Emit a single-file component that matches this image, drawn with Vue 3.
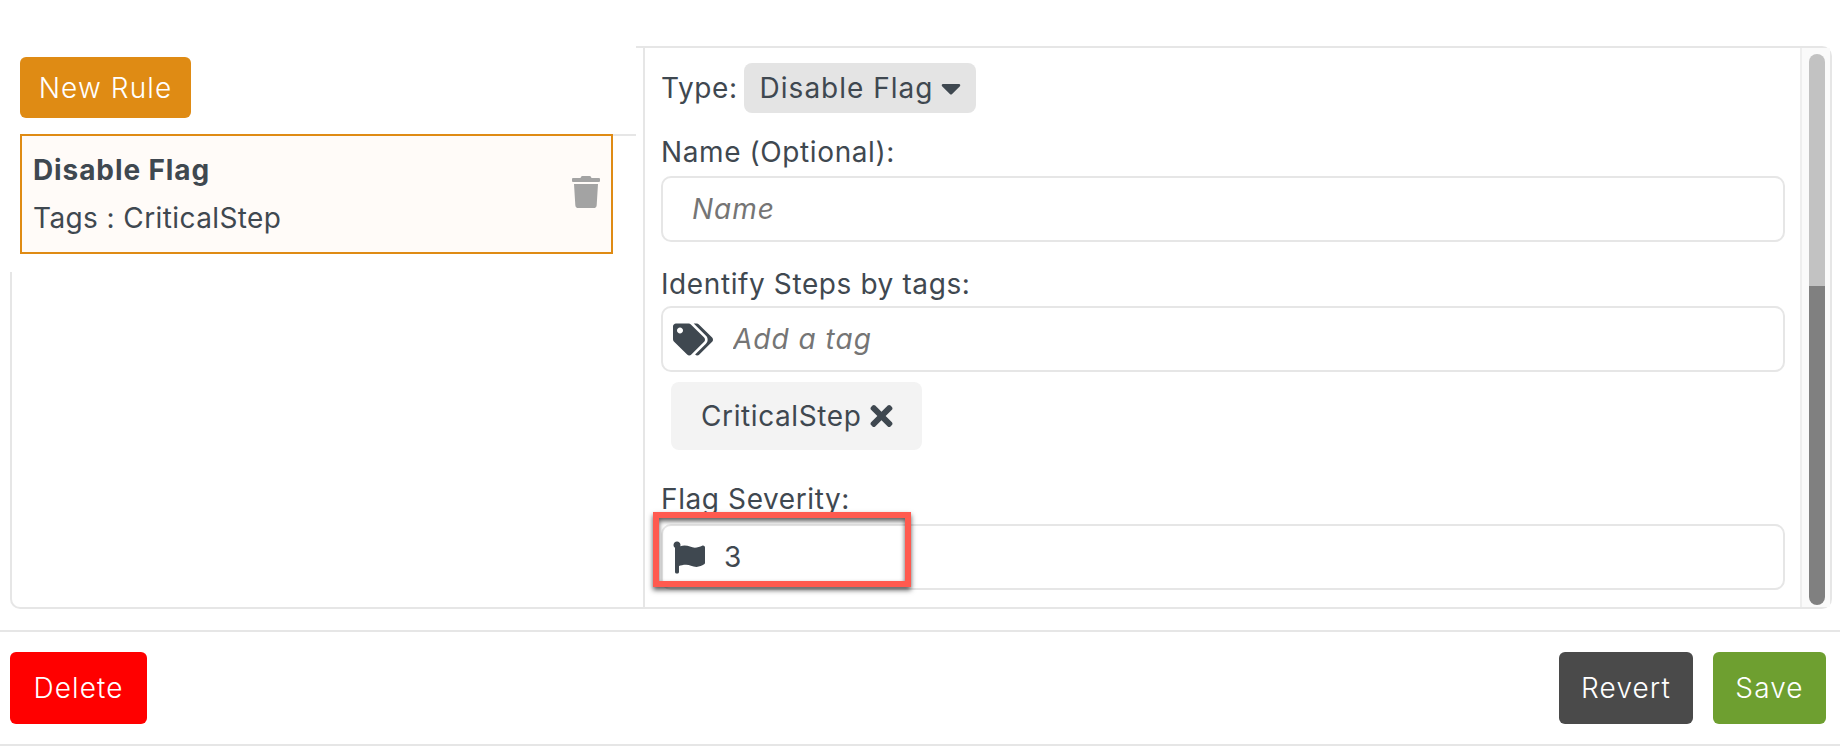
<script setup>
import { ref } from 'vue'

const tags = ref(['CriticalStep'])
const severity = ref('3')
</script>

<template>
  <div class="page">
    <div class="editor">
      <div class="rule-list">
        <div class="list-top">
          <button class="btn btn-new">New Rule</button>
          <div class="rule-row">
            <div class="rule-card">
              <div class="rule-text">
                <div class="rule-title">Disable Flag</div>
                <div class="rule-sub">Tags : CriticalStep</div>
              </div>
              <svg class="trash" viewBox="0 0 448 512"><path d="M432 32H312l-9.4-18.7A24 24 0 0 0 281.1 0H166.8a23.72 23.72 0 0 0-21.4 13.3L136 32H16A16 16 0 0 0 0 48v32a16 16 0 0 0 16 16h416a16 16 0 0 0 16-16V48a16 16 0 0 0-16-16zM53.2 467a48 48 0 0 0 47.9 45h245.8a48 48 0 0 0 47.9-45L416 128H32z"/></svg>
            </div>
            <div class="row-tick"></div>
          </div>
        </div>
        <div class="list-rest"></div>
      </div>

      <div class="rule-form">
        <div class="form-body">
          <div class="type-row">
            <span>Type:</span>
            <div class="type-select">
              Disable Flag
              <svg class="caret" viewBox="0 0 320 512"><path d="M31.3 192h257.3c17.8 0 26.7 21.5 14.1 34.1L174.1 354.8c-7.8 7.8-20.5 7.8-28.3 0L17.2 226.1C4.6 213.5 13.5 192 31.3 192z"/></svg>
            </div>
          </div>

          <label class="field-label label-name">Name (Optional):</label>
          <div class="field field-name">
            <input class="field-input input-name" placeholder="Name" />
          </div>

          <label class="field-label label-tags">Identify Steps by tags:</label>
          <div class="field">
            <svg class="icon-tags" viewBox="0 0 640 512"><path d="M497.941 225.941L286.059 14.059A48 48 0 0 0 252.118 0H48C21.49 0 0 21.49 0 48v204.118a48 48 0 0 0 14.059 33.941l211.882 211.882c18.744 18.745 49.136 18.746 67.882 0l204.118-204.118c18.745-18.745 18.745-49.137 0-67.882zM112 160c-26.51 0-48-21.49-48-48s21.49-48 48-48 48 21.49 48 48-21.49 48-48 48zm513.941 133.823L421.823 497.941c-18.745 18.745-49.137 18.745-67.882 0l-.36-.36L527.64 323.522c16.999-16.999 26.36-39.6 26.36-63.64s-9.362-46.641-26.36-63.64L331.397 0h48.721a48 48 0 0 1 33.941 14.059l211.882 211.882c18.745 18.745 18.745 49.137 0 67.882z"/></svg>
            <input class="field-input" placeholder="Add a tag" />
          </div>
          <div class="chips">
            <div v-for="tag in tags" :key="tag" class="chip">
              {{ tag }}
              <svg class="chip-x" viewBox="0 0 352 512"><path d="M242.72 256l100.07-100.07c12.28-12.28 12.28-32.19 0-44.48l-22.24-22.24c-12.28-12.28-32.19-12.28-44.48 0L176 189.28 75.93 89.21c-12.28-12.28-32.19-12.28-44.48 0L9.21 111.45c-12.28 12.28-12.28 32.19 0 44.48L109.28 256 9.21 356.07c-12.28 12.28-12.28 32.19 0 44.48l22.24 22.24c12.28 12.28 32.2 12.28 44.48 0L176 322.72l100.07 100.07c12.28 12.28 32.2 12.28 44.48 0l22.24-22.24c12.28-12.28 12.28-32.19 0-44.48L242.72 256z"/></svg>
            </div>
          </div>

          <label class="field-label label-flag">Flag Severity:</label>
          <div class="field field-flag">
            <svg class="icon-flag" viewBox="0 0 512 512"><path d="M349.565 98.783C295.978 98.783 251.721 64 184.348 64c-24.955 0-47.309 4.384-68.045 12.013a55.947 55.947 0 0 0 3.586-23.562C118.117 24.015 94.806 1.206 66.338.048 34.345-1.254 8 24.296 8 56c0 19.026 9.497 35.825 24 45.945V488c0 13.255 10.745 24 24 24h16c13.255 0 24-10.745 24-24v-94.4c28.311-12.064 63.582-22.122 114.435-22.122 53.588 0 97.844 34.783 165.217 34.783 48.169 0 86.667-16.294 122.505-40.858C506.84 359.452 512 349.571 512 339.045v-243.1c0-23.393-24.269-38.87-45.485-29.016-34.338 15.948-76.454 31.854-116.95 31.854z"/></svg>
            <input v-model="severity" class="field-input input-flag" />
            <div class="highlight"></div>
          </div>
        </div>

        <div class="scrollbar">
          <div class="thumb-top"></div>
          <div class="thumb-bottom"></div>
        </div>
      </div>
    </div>

    <div class="actions">
      <button class="btn btn-delete">Delete</button>
      <div class="actions-right">
        <button class="btn btn-revert">Revert</button>
        <button class="btn btn-save">Save</button>
      </div>
    </div>
  </div>
</template>

<style>
html, body {
  margin: 0;
  background: #fff;
}
</style>

<style scoped>
.page {
  height: 746px;
  box-sizing: border-box;
  display: flex;
  flex-direction: column;
  padding-top: 46px;
  font-family: Inter, "Noto Sans", sans-serif;
  font-size: 28px;
  letter-spacing: 0.6px;
  color: #3f4850;
  overflow: hidden;
}

.editor {
  display: flex;
  height: 563px;
  margin: 0 8px 0 10px;
}

.rule-list {
  width: 626px;
  display: flex;
  flex-direction: column;
}

.list-top {
  height: 226px;
  box-sizing: border-box;
  padding: 11px 0 0 10px;
}

.list-rest {
  flex: 1;
  border-left: 2px solid #e6e6e6;
  border-bottom: 2px solid #e6e6e6;
  border-bottom-left-radius: 10px;
}

.btn {
  border: none;
  border-radius: 6px;
  color: #fff;
  font: inherit;
  font-weight: 300;
  letter-spacing: 1.1px;
  padding: 0;
}

.btn-new {
  display: block;
  width: 171px;
  height: 61px;
  background: #df8b14;
}

.rule-row {
  display: flex;
  margin-top: 16px;
}

.rule-card {
  width: 593px;
  height: 120px;
  box-sizing: border-box;
  border: 2px solid #df8b14;
  background: #fffbf8;
  display: flex;
  align-items: center;
  justify-content: space-between;
  padding: 0 11px;
}

.rule-title {
  font-weight: 700;
  letter-spacing: 0.9px;
  line-height: 36px;
}

.rule-sub {
  letter-spacing: 0.4px;
  line-height: 36px;
  margin-top: 12px;
}

.trash {
  width: 28px;
  height: 32px;
  margin-top: -4px;
  fill: #a3a3a3;
}

.row-tick {
  width: 23px;
  height: 2px;
  background: #e6e6e6;
}

.rule-form {
  flex: 1;
  display: flex;
  border: 2px solid #e6e6e6;
  border-left: none;
  border-radius: 0 10px 10px 0;
  position: relative;
}

.form-body {
  flex: 1;
  border-left: 2px solid #e6e6e6;
  margin-left: 7px;
  padding: 15px 15px 0 16px;
  box-sizing: border-box;
  min-width: 0;
}

.type-row {
  display: flex;
  align-items: center;
  gap: 6px;
  height: 50px;
}

.type-select {
  display: flex;
  align-items: center;
  gap: 8px;
  height: 50px;
  padding: 0 15px 0 16px;
  background: #e4e4e4;
  border-radius: 8px;
  letter-spacing: 1px;
}

.caret {
  width: 20px;
  height: 32px;
  fill: #3f4850;
}

.field-label {
  display: block;
  line-height: 36px;
}

.label-name {
  margin-top: 21px;
  margin-bottom: 6px;
}

.label-tags {
  margin-top: 24px;
  margin-bottom: 4px;
}

.label-flag {
  margin-top: 31px;
  margin-bottom: 7px;
}

.field {
  position: relative;
  display: flex;
  align-items: center;
  height: 66px;
  box-sizing: border-box;
  border: 2px solid #e6e6e6;
  border-radius: 10px;
}

.field-input {
  flex: 1;
  min-width: 0;
  border: none;
  outline: none;
  background: transparent;
  font: inherit;
  letter-spacing: inherit;
  color: #3f4850;
  padding: 0;
  margin-left: 20px;
}

.input-name {
  margin-left: 29px;
}

.input-flag {
  margin-left: 19px;
}

.field-input::placeholder {
  font-style: italic;
  letter-spacing: 1px;
  color: #757575;
  opacity: 1;
}

.icon-tags {
  width: 40px;
  height: 33px;
  margin-left: 10px;
  fill: #3f4850;
}

.icon-flag {
  width: 32px;
  height: 33px;
  margin-left: 10px;
  fill: #3f4850;
}

.chips {
  display: flex;
  margin: 10px 0 0 10px;
}

.chip {
  display: flex;
  align-items: center;
  gap: 9px;
  height: 68px;
  padding: 0 29px 0 30px;
  background: #f3f3f3;
  border-radius: 8px;
}

.chip-x {
  width: 23px;
  height: 32px;
  fill: #3f4850;
}

.highlight {
  position: absolute;
  left: -10px;
  top: -14px;
  width: 258px;
  height: 75px;
  box-sizing: border-box;
  border: 6px solid #ff5a4f;
  box-shadow: 0 3px 5px rgba(0, 0, 0, 0.65), inset 0 3px 5px rgba(0, 0, 0, 0.65);
}

.scrollbar {
  width: 30px;
  box-sizing: border-box;
  border-left: 2px solid #eee;
  padding: 6px 5px 2px 7px;
  background: #fafafa;
  display: flex;
  flex-direction: column;
}

.thumb-top {
  height: 232px;
  background: #c2c2c2;
  border-radius: 8px 8px 0 0;
}

.thumb-bottom {
  flex: 1;
  background: #808080;
  border-radius: 0 0 8px 8px;
}

.actions {
  margin-top: 21px;
  height: 116px;
  box-sizing: border-box;
  border-top: 2px solid #e6e6e6;
  border-bottom: 2px solid #e6e6e6;
  padding: 20px 14px 20px 10px;
  display: flex;
  justify-content: space-between;
}

.actions-right {
  display: flex;
  gap: 20px;
}

.btn-delete {
  width: 137px;
  background: #ff0000;
}

.btn-revert {
  width: 134px;
  background: #4a4a4a;
}

.btn-save {
  width: 113px;
  background: #6e9f30;
}
</style>
